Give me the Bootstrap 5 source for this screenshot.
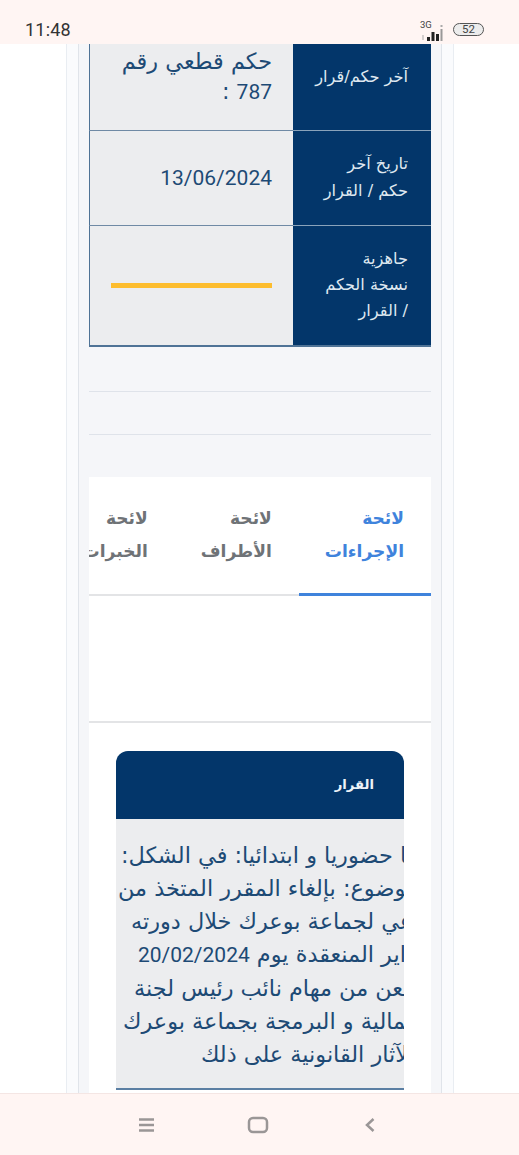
<!DOCTYPE html>
<html lang="ar" dir="rtl">
<head>
<meta charset="utf-8">
<meta name="viewport" content="width=device-width, initial-scale=1">
<title>لائحة الإجراءات</title>
<link href="https://cdn.jsdelivr.net/npm/bootstrap@5.3.0/dist/css/bootstrap.min.css" rel="stylesheet">
<style>
html,body{height:100%;margin:0}
body{background:#fff;font-family:"DejaVu Sans",sans-serif;color:#1d4a75;overflow:hidden;height:1155px;width:519px}
.num{font-family:"Roboto",sans-serif}
.phone-shell{height:1155px;width:519px}
.sys-top{height:44px;background:#fff5f3;padding:0 35px 0 25px;color:#333;flex:none;position:relative;z-index:2;font-family:"Roboto",sans-serif}
.sys-time{font-size:18px;padding-top:15px;line-height:29px;letter-spacing:.2px}
.sys-status{padding-top:21px;gap:8px;height:44px}
.net-wrap{width:25px;height:18px;position:relative}
.net-label{position:absolute;left:0;top:-1px;font-size:9.5px;line-height:10px;color:#444}
.batt{width:31px;height:13px;margin-top:2px;border:1.4px solid #555;border-radius:7px;font-size:11.5px;line-height:11px;text-align:center;color:#444;background:#ececec}
.page-scroll{flex:1 1 auto;min-height:0;overflow:hidden}
.shell-outer{width:388px;margin-left:66px;margin-right:65px;height:100%;background:#fafbfd;border-left:1px solid #e9edf2;border-right:1px solid #e9edf2;padding:0 11px}
.shell-inner{height:100%;background:#f5f6f9;border-left:1px solid #e0e4ea;border-right:1px solid #e0e4ea;padding:0 10px;overflow:hidden}
.info-table{width:342px;margin:-20px 0 0;table-layout:fixed;border-collapse:collapse;border-bottom:2px solid #4f7396}
.info-table th,.info-table td{padding:0;vertical-align:middle;font-weight:400;border-bottom:1.5px solid #6f8aa5}
.info-table tr:last-child th,.info-table tr:last-child td{border-bottom:0}
.info-table th{width:138px;background:#03366a;color:#dfe8f0;font-size:16.2px;line-height:26.3px;padding:0 23px 0 10px;border-bottom-color:#8aa3bb}
.info-table td{background:#ecedef;color:#1d4a75;font-size:22.4px;line-height:30px;padding:0 21px 0 21px;border-left:1.5px solid #4f7396}
.info-table td .num{font-size:21px}
.row-a{height:106px}.row-b{height:95px}.row-c{height:121px}
.gold-line{height:4.5px;background:#fdbd2e}
.thin-rule{border-top:1px solid #dfe3ea;height:43px}
.first-rule{margin-top:44px}
.tab-card{background:#fff;margin-top:0;height:700px}
.tabs-strip{height:119px;padding:0;flex-wrap:nowrap;overflow:hidden;box-shadow:inset 0 -2px 0 #e3e4e6}
.tabs-strip .nav-link{flex:none;height:119px;padding:25px 27px 0 26px;font-size:17.1px;line-height:32.5px;font-weight:700;color:#6f7377;border:0;border-radius:0;background:none;text-align:right;white-space:nowrap;border-bottom:3px solid transparent}
.tabs-strip .nav-link.active{color:#3f83dc;border-bottom-color:#3f83dc}
.tab-blank{height:127px;border-bottom:2px solid #e3e4e6}
.decision{width:288px;margin:28px 27px 0;background:#ecedef;overflow:hidden;border-radius:12px 12px 0 0;border-bottom:2px solid #5b7fa3}
.decision-head{background:#03366a;color:#eef3f8;height:68px;line-height:68px;padding:0 30px;font-size:13.2px;font-weight:700}
.decision-body{height:269px;padding-top:20px;overflow:hidden}
.decision-line{display:block;white-space:nowrap;font-size:22.4px;line-height:33px;color:#1d4a75;width:420px;margin-right:-132px;text-align:left}
.decision-line .num{font-size:21px}
.l1{padding-left:5px}.l2{padding-left:2px}.l3{padding-left:15px}.l4{padding-left:22px}.l5{padding-left:18px}.l6{padding-left:7px}.l7{padding-left:85px}
.sys-bottom{height:62px;flex:none;background:#fff5f3;border-top:1px solid #f4e6e4;position:relative;z-index:2}
.sys-bottom svg{display:block}
</style>
</head>
<body>
<div class="phone-shell d-flex flex-column">
  <div class="sys-top d-flex justify-content-between" dir="ltr">
    <div class="sys-time">11:48</div>
    <div class="sys-status d-flex align-items-start">
      <div class="net-wrap">
        <span class="net-label">3G</span>
        <svg width="25" height="18" viewBox="0 0 25 18"><rect x="2.500" y="10" width="1" height="5" fill="#aaa"/><rect x="7" y="12" width="3" height="4" fill="#222"/><rect x="11.500" y="7" width="3" height="9" fill="#222"/><rect x="16" y="9" width="3" height="7" fill="#222"/><rect x="20.500" y="4" width="2" height="12" fill="#999"/><rect x="20.500" y="0" width="2" height="2" fill="#aaa"/></svg>
      </div>
      <div class="batt">52</div>
    </div>
  </div>

  <div class="page-scroll">
    <div class="shell-outer">
      <div class="shell-inner">
        <table class="info-table">
          <tbody>
            <tr class="row-a"><th scope="row">آخر حكم/قرار</th><td>حكم قطعي رقم<br><span class="num">787</span> :</td></tr>
            <tr class="row-b"><th scope="row">تاريخ آخر<br>حكم / القرار</th><td class="text-end"><span class="num">13/06/2024</span></td></tr>
            <tr class="row-c"><th scope="row">جاهزية<br>نسخة الحكم<br>/ القرار</th><td><div class="gold-line"></div></td></tr>
          </tbody>
        </table>
        <div class="thin-rule first-rule"></div>
        <div class="thin-rule"></div>
        <div class="tab-card">
          <ul class="nav tabs-strip">
            <li class="nav-item"><a class="nav-link active" href="#">لائحة<br>الإجراءات</a></li>
            <li class="nav-item"><a class="nav-link" href="#">لائحة<br>الأطراف</a></li>
            <li class="nav-item"><a class="nav-link" href="#">لائحة<br>الخبرات</a></li>
          </ul>
          <div class="tab-blank"></div>
          <div class="decision">
            <div class="decision-head">القرار</div>
            <div class="decision-body">
              <span class="decision-line l1">علنيا حضوريا و ابتدائيا: في الشكل:</span>
              <span class="decision-line l2">في الموضوع: بإلغاء المقرر المتخذ من</span>
              <span class="decision-line l3">الجماعي لجماعة بوعرك خلال دورته</span>
              <span class="decision-line l4">فبراير المنعقدة يوم <span class="num">20/02/2024</span></span>
              <span class="decision-line l5">الطعن من مهام نائب رئيس لجنة</span>
              <span class="decision-line l6">الشؤون المالية و البرمجة بجماعة بوعرك</span>
              <span class="decision-line l7">مع الآثار القانونية على ذلك</span>
            </div>
          </div>
        </div>
      </div>
    </div>
  </div>

  <div class="sys-bottom d-flex align-items-center" dir="ltr">
    <svg class="position-absolute" style="left:138px;top:23px" width="17" height="16" viewBox="0 0 17 16"><path d="M1 2.5h15M1 8h15M1 13.500h15" stroke="#9a9696" stroke-width="2.400" fill="none"/></svg>
    <svg class="position-absolute" style="left:247px;top:22px" width="22" height="18" viewBox="0 0 22 18"><rect x="2" y="2" width="18" height="14" rx="4" stroke="#9a9696" stroke-width="2.500" fill="none"/></svg>
    <svg class="position-absolute" style="left:364px;top:23px" width="12" height="16" viewBox="0 0 12 16"><path d="M9.500 2 3 8l6.500 6" stroke="#9a9696" stroke-width="2.500" fill="none"/></svg>
  </div>
</div>
<script src="https://cdn.jsdelivr.net/npm/bootstrap@5.3.0/dist/js/bootstrap.bundle.min.js"></script>
</body>
</html>
